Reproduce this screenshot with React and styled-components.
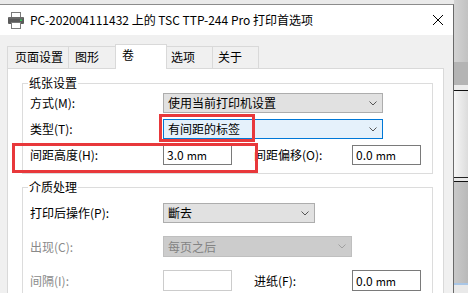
import React from 'react';
import styled, { createGlobalStyle } from 'styled-components';

const Global = createGlobalStyle`
  html, body { margin: 0; padding: 0; }
  body {
    background: #eaeaea;
    font-family: "Noto Sans CJK SC", "Microsoft YaHei", "Noto Sans", sans-serif;
    font-size: 12px;
    overflow: hidden;
  }
`;

const Screen = styled.div`
  position: relative;
  width: 468px;
  height: 293px;
  display: flex;
  overflow: hidden;
  background: #eaeaea;
`;

const Window = styled.div`
  flex: none;
  margin-top: 4px;
  width: 454px;
  height: 289px;
  box-sizing: border-box;
  border-top: 1px solid #8c8c8c;
  border-right: 1px solid #6a6a6a;
  background: #f0f0f0;
  display: flex;
  flex-direction: column;
  overflow: hidden;
`;

const TitleBar = styled.div`
  flex: none;
  height: 30px;
  background: #fff;
  display: flex;
  align-items: center;
  padding-left: 8px;
  position: relative;
`;

const TitleText = styled.span`
  margin-left: 6px;
  color: #000;
  font-size: 12px;
  white-space: nowrap;
  line-height: 16px;
`;

const CloseBtn = styled.div`
  margin-left: auto;
  margin-right: 10px;
  width: 10px;
  height: 10px;
  display: flex;
`;

const Body = styled.div`
  flex: 1;
  display: flex;
  flex-direction: column;
  padding-top: 9px;
  min-height: 0;
`;

const TabStrip = styled.div`
  flex: none;
  display: flex;
  align-items: flex-end;
  height: 24px;
  padding-left: 7px;
  position: relative;
  z-index: 2;
`;

const Tab = styled.div`
  box-sizing: border-box;
  width: ${p => p.$w}px;
  height: ${p => (p.$active ? 25 : 22)}px;
  margin-bottom: ${p => (p.$active ? -1 : 0)}px;
  margin-left: ${p => (p.$first ? 0 : -1)}px;
  border: 1px solid #d9d9d9;
  border-bottom: none;
  background: ${p => (p.$active ? '#fff' : '#f0f0f0')};
  position: relative;
  z-index: ${p => (p.$active ? 2 : 1)};
  padding-left: ${p => p.$pl}px;
  padding-top: ${p => (p.$active ? 2 : 2)}px;
  line-height: 16px;
  white-space: nowrap;
  color: #000;
`;

const Panel = styled.div`
  flex: 1;
  margin-left: 7px;
  width: 437px;
  box-sizing: border-box;
  border: 1px solid #d9d9d9;
  border-bottom: none;
  background: #fff;
  padding: 14px 0 0 14px;
  display: flex;
  flex-direction: column;
  gap: 13px;
  min-height: 0;
  overflow: hidden;
  position: relative;
  z-index: 1;
`;

const Group = styled.div`
  position: relative;
  flex: none;
  width: 411px;
  height: ${p => p.$h}px;
  box-sizing: border-box;
  border: 1px solid #dcdcdc;
  padding: ${p => p.$pt}px 0 0 7px;
  display: flex;
  flex-direction: column;
  gap: ${p => p.$gap}px;
`;

const Legend = styled.span`
  position: absolute;
  top: -9px;
  left: 5px;
  padding: 0 1px;
  background: #fff;
  line-height: 16px;
  color: #000;
`;

const Row = styled.div`
  display: flex;
  align-items: center;
  height: ${p => p.$h || 20}px;
`;

const Label = styled.span`
  flex: none;
  width: ${p => p.$w}px;
  margin-left: ${p => p.$ml || 0}px;
  color: ${p => (p.$disabled ? '#8a8a8a' : '#000')};
  white-space: nowrap;
  line-height: 16px;
`;

const selectColors = {
  normal: { bg: '#e1e1e1', border: '#adadad', text: '#000', chev: '#555' },
  focus: { bg: '#e5f1fb', border: '#0078d7', text: '#000', chev: '#555' },
  disabled: { bg: '#cccccc', border: '#bfbfbf', text: '#838383', chev: '#a0a0a0' },
};

const SelectBox = styled.div`
  flex: none;
  box-sizing: border-box;
  width: ${p => p.$w}px;
  height: 100%;
  background: ${p => selectColors[p.$state].bg};
  border: 1px solid ${p => selectColors[p.$state].border};
  color: ${p => selectColors[p.$state].text};
  display: flex;
  align-items: center;
  padding: 0 5px 0 4px;
  line-height: 16px;
  white-space: nowrap;
`;

const Chevron = styled.svg`
  margin-left: auto;
  flex: none;
`;

const Input = styled.div`
  flex: none;
  box-sizing: border-box;
  width: ${p => p.$w || 69}px;
  height: 100%;
  background: #fff;
  border: 1px solid ${p => (p.$disabled ? '#cccccc' : '#7a7a7a')};
  display: flex;
  align-items: center;
  padding-left: 3px;
  line-height: 16px;
  color: #000;
  white-space: nowrap;
`;

const Unit = styled.span`
  margin-left: 3px;
  font-size: 11px;
`;

const Backdrop = styled.div`
  flex: 1;
  display: flex;
  flex-direction: column;
`;

const Strip = styled.div`
  flex: none;
  height: ${p => p.$h}px;
  background: ${p => p.$bg};
`;

const Annotation = styled.div`
  position: absolute;
  left: ${p => p.$x}px;
  top: ${p => p.$y}px;
  width: ${p => p.$w}px;
  height: ${p => p.$h}px;
  box-sizing: border-box;
  border: 3px solid #e8383b;
  pointer-events: none;
  z-index: 10;
`;

function PrinterIcon() {
  return (
    <svg width="16" height="17" viewBox="0 0 16 17">
      <rect x="3.5" y="0.5" width="9" height="5" fill="#fff" stroke="#7a7a7a" />
      <rect x="0" y="5" width="16" height="7" rx="1" fill="#5b5b5b" />
      <rect x="1" y="5.5" width="14" height="1" fill="#7d7d7d" />
      <rect x="12" y="7.5" width="2" height="1.5" fill="#34c759" />
      <rect x="3.5" y="10.5" width="9" height="6" fill="#fff" stroke="#7a7a7a" />
    </svg>
  );
}

function Chev({ color }) {
  return (
    <Chevron width="8" height="5" viewBox="0 0 8 5">
      <path d="M0.5 0.5 L4 4 L7.5 0.5" fill="none" stroke={color} strokeWidth="1" />
    </Chevron>
  );
}

function Select({ w, state = 'normal', children }) {
  return (
    <SelectBox $w={w} $state={state}>
      {children}
      <Chev color={selectColors[state].chev} />
    </SelectBox>
  );
}

function Mm({ value }) {
  return (
    <Input>
      {value}
      <Unit>mm</Unit>
    </Input>
  );
}

const tabs = [
  { t: '页面设置', w: 62, pl: 7 },
  { t: '图形', w: 48, pl: 6 },
  { t: '卷', w: 52, pl: 6, active: true },
  { t: '选项', w: 47, pl: 4 },
  { t: '关于', w: 47, pl: 5 },
];

export default function App() {
  return (
    <Screen>
      <Global />
      <Window>
        <TitleBar>
          <PrinterIcon />
          <TitleText>PC-202004111432 上的 TSC TTP-244 Pro 打印首选项</TitleText>
          <CloseBtn>
            <svg width="10" height="10" viewBox="0 0 10 10">
              <path d="M0 0 L10 10 M10 0 L0 10" stroke="#000" strokeWidth="1" />
            </svg>
          </CloseBtn>
        </TitleBar>
        <Body>
          <TabStrip>
            {tabs.map((tb, i) => (
              <Tab key={tb.t} $w={tb.w} $pl={tb.pl} $active={tb.active} $first={i === 0}>
                {tb.t}
              </Tab>
            ))}
          </TabStrip>
          <Panel>
            <Group $h={91} $pt={9} $gap={6}>
              <Legend>纸张设置</Legend>
              <Row>
                <Label $w={133}>方式(M):</Label>
                <Select w={220}>使用当前打印机设置</Select>
              </Row>
              <Row>
                <Label $w={133}>类型(T):</Label>
                <Select w={220} state="focus">有间距的标签</Select>
              </Row>
              <Row>
                <Label $w={133}>间距高度(H):</Label>
                <Mm value="3.0" />
                <Label $w={98} $ml={22}>间距偏移(O):</Label>
                <Mm value="0.0" />
              </Row>
            </Group>
            <Group $h={140} $pt={15} $gap={13}>
              <Legend>介质处理</Legend>
              <Row>
                <Label $w={133}>打印后操作(P):</Label>
                <Select w={152}>斷去</Select>
              </Row>
              <Row $h={21}>
                <Label $w={133} $disabled>出现(C):</Label>
                <Select w={189} state="disabled">每页之后</Select>
              </Row>
              <Row $h={21}>
                <Label $w={133} $disabled>间隔(I):</Label>
                <Input $disabled />
                <Label $w={98} $ml={22}>进纸(F):</Label>
                <Mm value="0.0" />
              </Row>
            </Group>
          </Panel>
        </Body>
      </Window>
      <Backdrop>
        <Strip $h={62} $bg="linear-gradient(to right, #d3d3d3, #c2c2c2)" />
        <Strip $h={23} $bg="#b4b4b4" />
        <Strip $h={5} $bg="#ececec" />
        <Strip $h={1} $bg="#111" />
        <Strip $h={86} $bg="linear-gradient(to right, #f6f6f6, #dcdcdc)" />
        <Strip $h={1} $bg="#222" />
        <Strip $h={3} $bg="#e8e8e8" />
        <Strip $h={1} $bg="#111" />
        <Strip $h={101} $bg="linear-gradient(to right, #c9c9c9, #b9b9b9)" />
        <Strip $h={2} $bg="#a9c6e6" />
        <Strip $h={8} $bg="#e9e9e9" />
      </Backdrop>
      <Annotation $x={159} $y={114} $w={96} $h={28} />
      <Annotation $x={12} $y={143} $w={246} $h={30} />
    </Screen>
  );
}
